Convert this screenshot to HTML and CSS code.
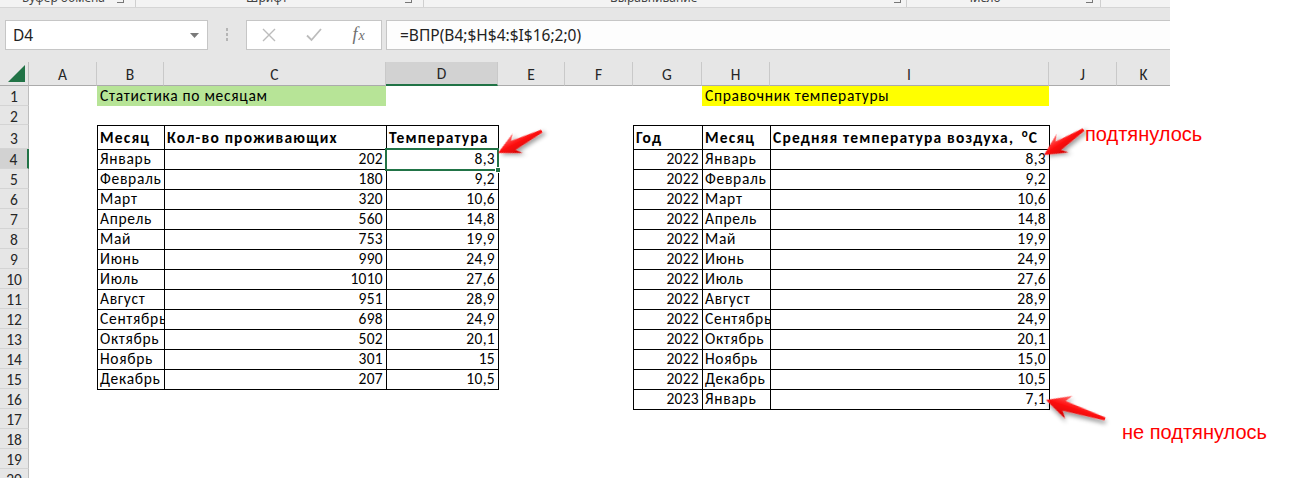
FILE: index.html
```html
<!DOCTYPE html>
<html lang="ru">
<head>
<meta charset="utf-8">
<title>ВПР</title>
<link rel="stylesheet" href="styles.css">
</head>
<body>
<div class="app">
  <div class="ribbon">
    <div class="group g1"><span class="glabel">Буфер обмена</span><span class="launcher"></span></div>
    <div class="group g2"><span class="glabel">Шрифт</span><span class="launcher"></span></div>
    <div class="group g3"><span class="glabel">Выравнивание</span><span class="launcher"></span></div>
    <div class="group g4"><span class="glabel">Число</span><span class="launcher"></span></div>
  </div>
  <div class="fbar">
    <div class="namebox"><span>D4</span><svg class="caret" width="9" height="5" viewBox="0 0 9 5"><path d="M0 0h9L4.5 5z" fill="#7a7a7a"/></svg></div>
    <div class="grip"><i></i><i></i><i></i></div>
    <div class="fbtns">
      <span class="btn"><svg width="14" height="14" viewBox="0 0 14 14"><path d="M1 1L13 13M13 1L1 13" stroke="#bcbcbc" stroke-width="1.4" fill="none"/></svg></span>
      <span class="btn"><svg width="16" height="14" viewBox="0 0 16 14"><path d="M1 7.5L5.5 12L15 1" stroke="#bcbcbc" stroke-width="1.8" fill="none"/></svg></span>
      <span class="btn fx"><i>f</i><i class="fxx">x</i></span>
    </div>
    <div class="formula">=ВПР(B4;$H$4:$I$16;2;0)</div>
  </div>
  <div class="sheet">
    <div class="row hdr">
      <div class="ch corner"><svg width="17" height="17" viewBox="0 0 17 17"><path d="M17 0V17H0z" fill="#217346"/></svg></div>
      <div class="ch">A</div><div class="ch">B</div><div class="ch">C</div><div class="ch act">D</div><div class="ch">E</div><div class="ch">F</div><div class="ch">G</div><div class="ch">H</div><div class="ch">I</div><div class="ch">J</div><div class="ch">K</div>
    </div>
    <div class="row"><div class="rh">1</div><div class="c cB span2 green">Статистика по месяцам</div><div class="c cH span2 yellow">Справочник температуры</div></div>
    <div class="row r2"><div class="rh">2</div></div>
    <div class="row r3"><div class="rh">3</div>
      <div class="c t b cB">Месяц</div><div class="c t b">Кол-во проживающих</div><div class="c t b re">Температура</div>
      <div class="c t b cG">Год</div><div class="c t b">Месяц</div><div class="c t b re">Средняя температура воздуха, <sup>o</sup>С</div>
    </div>
    <div class="row"><div class="rh act">4</div><div class="c t cB">Январь</div><div class="c t n">202</div><div class="c t n re">8,3</div><div class="c t n cG">2022</div><div class="c t">Январь</div><div class="c t n re">8,3</div></div>
    <div class="row"><div class="rh">5</div><div class="c t cB">Февраль</div><div class="c t n">180</div><div class="c t n re">9,2</div><div class="c t n cG">2022</div><div class="c t">Февраль</div><div class="c t n re">9,2</div></div>
    <div class="row"><div class="rh">6</div><div class="c t cB">Март</div><div class="c t n">320</div><div class="c t n re">10,6</div><div class="c t n cG">2022</div><div class="c t">Март</div><div class="c t n re">10,6</div></div>
    <div class="row"><div class="rh">7</div><div class="c t cB">Апрель</div><div class="c t n">560</div><div class="c t n re">14,8</div><div class="c t n cG">2022</div><div class="c t">Апрель</div><div class="c t n re">14,8</div></div>
    <div class="row"><div class="rh">8</div><div class="c t cB">Май</div><div class="c t n">753</div><div class="c t n re">19,9</div><div class="c t n cG">2022</div><div class="c t">Май</div><div class="c t n re">19,9</div></div>
    <div class="row"><div class="rh">9</div><div class="c t cB">Июнь</div><div class="c t n">990</div><div class="c t n re">24,9</div><div class="c t n cG">2022</div><div class="c t">Июнь</div><div class="c t n re">24,9</div></div>
    <div class="row"><div class="rh">10</div><div class="c t cB">Июль</div><div class="c t n">1010</div><div class="c t n re">27,6</div><div class="c t n cG">2022</div><div class="c t">Июль</div><div class="c t n re">27,6</div></div>
    <div class="row"><div class="rh">11</div><div class="c t cB">Август</div><div class="c t n">951</div><div class="c t n re">28,9</div><div class="c t n cG">2022</div><div class="c t">Август</div><div class="c t n re">28,9</div></div>
    <div class="row"><div class="rh">12</div><div class="c t cB">Сентябрь</div><div class="c t n">698</div><div class="c t n re">24,9</div><div class="c t n cG">2022</div><div class="c t">Сентябрь</div><div class="c t n re">24,9</div></div>
    <div class="row"><div class="rh">13</div><div class="c t cB">Октябрь</div><div class="c t n">502</div><div class="c t n re">20,1</div><div class="c t n cG">2022</div><div class="c t">Октябрь</div><div class="c t n re">20,1</div></div>
    <div class="row"><div class="rh">14</div><div class="c t cB">Ноябрь</div><div class="c t n">301</div><div class="c t n re">15</div><div class="c t n cG">2022</div><div class="c t">Ноябрь</div><div class="c t n re">15,0</div></div>
    <div class="row"><div class="rh">15</div><div class="c t be cB">Декабрь</div><div class="c t be n">207</div><div class="c t be n re">10,5</div><div class="c t n cG">2022</div><div class="c t">Декабрь</div><div class="c t n re">10,5</div></div>
    <div class="row"><div class="rh">16</div><div class="c t be n cG">2023</div><div class="c t be">Январь</div><div class="c t be n re">7,1</div></div>
    <div class="row"><div class="rh">17</div></div>
    <div class="row"><div class="rh">18</div></div>
    <div class="row"><div class="rh">19</div></div>
    <div class="row"><div class="rh">20</div></div>
    <div class="sel"><span class="handle"></span></div>
  </div>
</div>

<svg class="annot" width="1300" height="478" viewBox="0 0 1300 478">
  <defs>
    <linearGradient id="red" x1="0" y1="0" x2="0" y2="1">
      <stop offset="0" stop-color="#ff7070"/>
      <stop offset="0.45" stop-color="#ff1010"/>
      <stop offset="1" stop-color="#d00000"/>
    </linearGradient>
    <filter id="sh" x="-40%" y="-40%" width="180%" height="180%">
      <feDropShadow dx="2" dy="3" stdDeviation="2" flood-color="#000" flood-opacity="0.4"/>
    </filter>
  </defs>
  <polygon class="arrow" transform="translate(498 153) rotate(-26.6)" points="0,0 22,-11 17,-5 49,-1.6 49,1.6 17,5 22,11"/>
  <polygon class="arrow" transform="translate(1044 155) rotate(-32.7)" points="0,0 22,-11 17,-5 47,-1.6 47,1.6 17,5 22,11"/>
  <polygon class="arrow" transform="translate(1046 400) rotate(17.8)" points="0,0 24,-12 19,-5 62,-1.6 62,1.6 19,5 24,12"/>
</svg>
<span class="note n1">подтянулось</span>
<span class="note n2">не подтянулось</span>
</body>
</html>
```
FILE: styles.css
```css
* { box-sizing: border-box; }
body {
  margin: 0;
  width: 1300px;
  height: 478px;
  overflow: hidden;
  position: relative;
  background: #fff;
  font-family: Carlito, Calibri, Lato, "Noto Sans", sans-serif;
  color: #000;
}
.app { width: 1170px; }

/* ribbon remnant */
.ribbon {
  height: 8px;
  background: #f3f3f3;
  border-bottom: 1px solid #d5d5d5;
  display: flex;
  overflow: hidden;
  font: 12px "Noto Sans", sans-serif;
  color: #444;
}
.group {
  display: flex;
  align-items: flex-start;
  border-right: 1px solid #cfcfcf;
  height: 7px;
}
.glabel { line-height: 12px; margin-top: -8px; white-space: nowrap; }
.launcher {
  width: 7px; height: 7px;
  margin-left: auto;
  margin-top: -4px;
  border-right: 1px solid #777;
  border-bottom: 1px solid #777;
}
.g1 { width: 136px; padding-left: 22px; padding-right: 11px; }
.g2 { width: 288px; padding-left: 110px; padding-right: 11px; }
.g3 { width: 483px; padding-left: 186px; padding-right: 5px; }
.g4 { width: 194px; padding-left: 58px; padding-right: 7px; }

/* formula bar */
.fbar {
  height: 54px;
  background: #e6e6e6;
  display: flex;
  align-items: flex-start;
  padding-top: 12px;
}
.namebox {
  margin-left: 5px;
  width: 203px;
  height: 30px;
  background: #fff;
  border: 1px solid #c6c6c6;
  display: flex;
  align-items: center;
  justify-content: space-between;
  padding: 0 8px 0 7px;
  font: 15.5px "Noto Sans", sans-serif;
  color: #222;
}
.caret { margin-top: 1px; }
.grip {
  width: 38px;
  height: 30px;
  display: flex;
  flex-direction: column;
  align-items: center;
  padding-top: 8px;
  gap: 2px;
}
.grip i { display: block; width: 2px; height: 3px; background: #b5b5b5; }
.fbtns {
  width: 136px;
  height: 30px;
  background: #fff;
  border: 1px solid #c6c6c6;
  display: flex;
  align-items: center;
}
.btn {
  width: 45px;
  display: flex;
  justify-content: center;
  align-items: center;
}
.fx {
  font-family: "Liberation Serif", serif;
  font-size: 18px;
  color: #6e6e6e;
  margin-top: -2px;
}
.fx i { font-style: italic; }
.fxx { font-size: 14px; position: relative; top: 2px; margin-left: 1px; }
.formula {
  margin-left: 4px;
  flex: 1;
  height: 30px;
  background: #fdfdfd;
  border: 1px solid #c6c6c6;
  border-right: none;
  padding-left: 13px;
  display: flex;
  align-items: center;
  font: 15.5px "Noto Sans", sans-serif;
  color: #222;
}

/* sheet */
.sheet { position: relative; font-size: 15px; }
.row {
  display: grid;
  grid-template-columns: 29px 68px 67px 222px 112px 67px 68px 69px 68px 279px 68px 53px;
  grid-template-rows: 20px;
  height: 20px;
}
.hdr { height: 24px; grid-template-rows: 24px; background: #e6e6e6; }
.ch {
  border-right: 1px solid #c9c9c9;
  border-bottom: 1px solid #ababab;
  display: flex;
  align-items: center;
  justify-content: center;
  color: #262626;
  padding-top: 1px;
  font-size: 15.5px;
}
.ch:last-child { border-right: none; }
.ch.act { background: #d2d2d2; border-bottom: 2px solid #217346; }
.corner { justify-content: flex-end; align-items: flex-end; padding: 0 3px 3px 0; border-right: 1px solid #bdbdbd; }
.r3 { height: 24px; grid-template-rows: 24px; }
.r2 { height: 19px; grid-template-rows: 19px; }

.rh {
  background: #e6e6e6;
  border-right: 1px solid #bdbdbd;
  border-bottom: 1px solid #d4d4d4;
  text-align: center;
  line-height: 19px;
  color: #262626;
  padding-top: 1px;
  font-size: 15.5px;
}
.rh.act { background: #d2d2d2; border-right: 2px solid #217346; }
.r3 .rh { line-height: 25px; }

.c {
  overflow: hidden;
  white-space: nowrap;
  padding: 0 3px;
  line-height: 20px;
  font-size: 15.5px;
  letter-spacing: 0.7px;
}
.r3 .c { line-height: 26px; }
.n { text-align: right; letter-spacing: 0.3px; padding-right: 3px; }
.b { font-weight: bold; letter-spacing: 1.2px; }
.cB { grid-column: 3; }
.cG { grid-column: 8; }
.cH { grid-column: 9; }
.span2 { grid-column-end: span 2; }
.green { background: #b7e497; }
.yellow { background: #ffff00; }
sup { font-size: 11px; vertical-align: 6px; line-height: 0; letter-spacing: 1px; margin-left: 3px; }

.t { box-shadow: inset 1px 1px 0 #000; }
.t.re { box-shadow: inset 1px 1px 0 #000, 1px 0 0 #000; }
.t.be { box-shadow: inset 1px 1px 0 #000, 0 1px 0 #000; }
.t.re.be { box-shadow: inset 1px 1px 0 #000, 1px 0 0 #000, 0 1px 0 #000, 1px 1px 0 #000; }

.sel {
  position: absolute;
  left: 385px;
  top: 86px;
  width: 114px;
  height: 23px;
  border: 2px solid #217346;
}
.handle {
  position: absolute;
  right: -4px;
  bottom: -4px;
  width: 6px;
  height: 6px;
  background: #217346;
  border: 1px solid #fff;
}

/* annotations */
.annot { position: absolute; left: 0; top: 0; pointer-events: none; }
.arrow { fill: url(#red); filter: url(#sh); }
.note {
  position: absolute;
  font: 20px "Liberation Sans", Arial, sans-serif;
  line-height: 20px;
  color: #ff0000;
  white-space: nowrap;
}
.n1 { left: 1085px; top: 124px; }
.n2 { left: 1122px; top: 422px; }
```
